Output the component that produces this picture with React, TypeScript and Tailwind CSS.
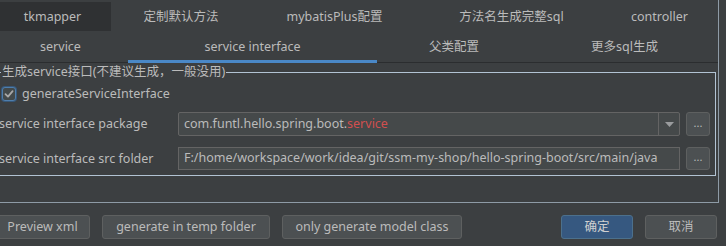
const topTabs = [
  { label: 'tkmapper', w: 'w-[111px] pr-[6px] bg-[#2f3133]' },
  { label: '定制默认方法', w: 'w-[140px]' },
  { label: 'mybatisPlus配置', w: 'w-[167px]' },
  { label: '方法名生成完整sql', w: 'w-[187px]' },
  { label: 'controller', w: 'w-[109px]' },
];

const subTabs = [
  { label: 'service', w: 'w-[128px] pr-[7px]', active: false },
  { label: 'service interface', w: 'w-[249px]', active: true },
  { label: '父类配置', w: 'w-[154px]', active: false },
  { label: '更多sql生成', w: 'w-[187px]', active: false },
];

const DotsButton = () => (
  <button className="w-[24px] h-full rounded-[3px] bg-[#4c5052] border border-[#5e6060] text-[#bbbbbb] text-[11px] leading-none flex items-end justify-center pb-[7px]">
    ...
  </button>
);

const App = () => {
  return (
    <div
      className="w-[726px] h-[246px] overflow-hidden bg-[#3c3f41] text-[#bbbbbb] text-[12.5px]"
      style={{ fontFamily: '"Noto Sans", "Noto Sans CJK SC", sans-serif' }}
    >
      {/* 外枠 */}
      <div className="w-[719px] h-[203px] border-r border-b border-[#8e9ba6]">
        {/* 上段タブ */}
        <div className="flex h-[31px] pt-[2px]">
          {topTabs.map((t) => (
            <div key={t.label} className={`${t.w} h-full flex items-center justify-center pt-[2px]`}>
              {t.label}
            </div>
          ))}
        </div>

        {/* 下段タブ */}
        <div className="flex h-[32px] border-b border-[#2b2d2f]">
          {subTabs.map((t) => (
            <div
              key={t.label}
              className={`${t.w} flex items-center justify-center ${
                t.active ? 'h-[32px] border-b-[3px] border-[#4a88c7] pt-[4px]' : 'h-[31px] pt-[1px]'
              }`}
            >
              {t.label}
            </div>
          ))}
        </div>

        {/* service interface 設定 */}
        <fieldset className="-ml-[4px] w-[720px] border border-[#b2c3d3] px-0 pb-[5px]">
          <legend className="ml-[4px] px-[1px] leading-[18px]">生成service接口(不建议生成，一般没用)</legend>

          <div className="flex items-center h-[26px] pl-[5px]">
            <span className="w-[14px] h-[14px] rounded-[3px] bg-[#43494a] border border-[#4f7eac] shadow-[0_0_0_1px_#37587a] flex items-center justify-center">
              <svg width="10" height="10" viewBox="0 0 10 10" fill="none">
                <path d="M1.5 5.2 L4 7.6 L8.6 2.2" stroke="#a8a8a8" strokeWidth="1.8" strokeLinecap="round" strokeLinejoin="round" />
              </svg>
            </span>
            <span className="ml-[6px]">generateServiceInterface</span>
          </div>

          <div className="flex items-center h-[24px] mt-[5px]">
            <span className="w-[181px] pl-[2px] whitespace-nowrap">service interface package</span>
            <div className="w-[502px] h-full flex rounded-[2px] bg-[#45494a] border border-[#646464]">
              <div className="flex-1 flex items-center pl-[5px]">
                com.funtl.hello.spring.boot.<span className="text-[#d14f4f]">service</span>
              </div>
              <div className="w-[21px] border-l border-[#646464] flex items-center justify-center">
                <svg width="9" height="5" viewBox="0 0 9 5">
                  <path d="M0 0 H9 L4.5 5 Z" fill="#9a9c9e" />
                </svg>
              </div>
            </div>
            <div className="ml-[6px] h-full">
              <DotsButton />
            </div>
          </div>

          <div className="flex items-center h-[23px] mt-[11px]">
            <span className="w-[181px] pl-[2px] whitespace-nowrap pt-[1px]">service interface src folder</span>
            <div className="w-[502px] h-full flex items-center pl-[5px] bg-[#45494a] border border-[#646464] whitespace-nowrap overflow-hidden">
              F:/home/workspace/work/idea/git/ssm-my-shop/hello-spring-boot/src/main/java
            </div>
            <div className="ml-[6px] h-full">
              <DotsButton />
            </div>
          </div>
        </fieldset>
      </div>

      {/* ボタン */}
      <div className="flex h-[24px] mt-[12px] pr-[9px]">
        <button className="-ml-[5px] w-[95px] rounded-[3px] bg-[#4c5052] border border-[#5e6060]">Preview xml</button>
        <button className="ml-[12px] w-[168px] rounded-[3px] bg-[#4c5052] border border-[#5e6060]">generate in temp folder</button>
        <button className="ml-[12px] w-[180px] rounded-[3px] bg-[#4c5052] border border-[#5e6060]">only generate model class</button>
        <button className="ml-auto w-[72px] rounded-[3px] bg-[#365880] border border-[#4c708c] text-[#d0d0d0]">确定</button>
        <button className="ml-[12px] w-[72px] rounded-[3px] bg-[#4c5052] border border-[#5e6060]">取消</button>
      </div>
    </div>
  );
};

export default App;
